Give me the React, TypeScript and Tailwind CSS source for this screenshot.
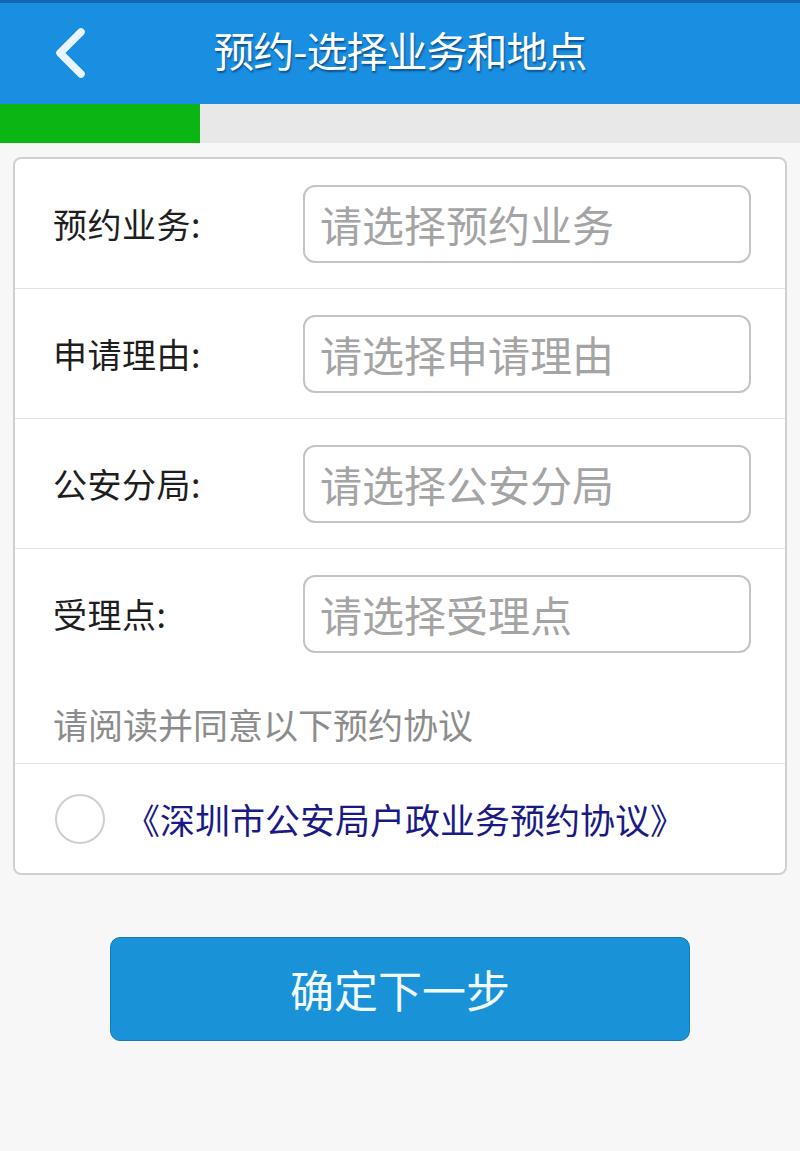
import { useState } from "react";

const rows = [
  { label: "预约业务:", placeholder: "请选择预约业务" },
  { label: "申请理由:", placeholder: "请选择申请理由" },
  { label: "公安分局:", placeholder: "请选择公安分局" },
  { label: "受理点:", placeholder: "请选择受理点" },
];

const fontStack = { fontFamily: '"Noto Sans CJK SC", "Noto Sans", sans-serif' };

export default function App() {
  const [agreed, setAgreed] = useState(false);

  return (
    <div className="min-h-[1151px] w-[800px] bg-[#f7f7f7]" style={fontStack}>
      <header className="relative flex h-[104px] items-center justify-center border-t-[3px] border-[#1267b0] bg-[#1a8fe2] pb-[8px]">
        <svg
          className="absolute left-[50px] top-[25px]"
          width="40"
          height="50"
          viewBox="0 0 40 50"
          fill="none"
        >
          <path
            d="M31 4 L10 25 L31 46"
            stroke="#eaf6ff"
            strokeWidth="7.5"
            strokeLinecap="round"
            strokeLinejoin="round"
          />
        </svg>
        <h1 className="text-[41px] leading-none tracking-[-1px] text-white [text-shadow:1px_2px_2px_rgba(0,40,90,0.6)]">
          预约-选择业务和地点
        </h1>
      </header>

      <div className="flex h-[39px] bg-[#e8e8e8]">
        <div className="w-[200px] bg-[#0bb514]" />
      </div>

      <div className="px-[13px] pt-[14px]">
        <div className="overflow-hidden rounded-[8px] border-2 border-[#cfcfcf] bg-white">
          {rows.map((row, i) => (
            <div
              key={row.label}
              className={[
                "flex h-[130px] items-center pl-[38px] pr-[34px]",
                i < rows.length - 1 ? "border-b border-[#e2e2e2]" : "",
              ].join(" ")}
            >
              <span className="w-[250px] text-[34px] leading-none tracking-[0.5px] text-[#1e1e1e]">
                {row.label}
              </span>
              <button
                type="button"
                className="flex h-[78px] flex-1 items-center rounded-[12px] border-2 border-[#c4c4c4] bg-white pl-[15px] text-left text-[42px] leading-none text-[#a4a4a4]"
              >
                {row.placeholder}
              </button>
            </div>
          ))}

          <div className="border-b border-[#e2e2e2] pb-[16px] pl-[38px] pt-[22px] text-[35px] leading-[46px] text-[#8c8c8c]">
            请阅读并同意以下预约协议
          </div>

          <div className="flex h-[109px] items-center pl-[40px]">
            <button
              type="button"
              onClick={() => setAgreed(!agreed)}
              className={[
                "h-[50px] w-[50px] rounded-full border-2",
                agreed ? "border-[#1a8fe2] bg-[#1a8fe2]" : "border-[#cfcfcf] bg-white",
              ].join(" ")}
            />
            <span className="ml-[20px] text-[35px] leading-none text-[#1a1a86]">
              《深圳市公安局户政业务预约协议》
            </span>
          </div>
        </div>
      </div>

      <div className="flex justify-center pt-[62px]">
        <button
          type="button"
          className="h-[104px] w-[580px] rounded-[10px] border border-[#1679b8] bg-[#1a92d8] text-[44px] leading-none text-[#f2fbff]"
        >
          确定下一步
        </button>
      </div>
    </div>
  );
}
